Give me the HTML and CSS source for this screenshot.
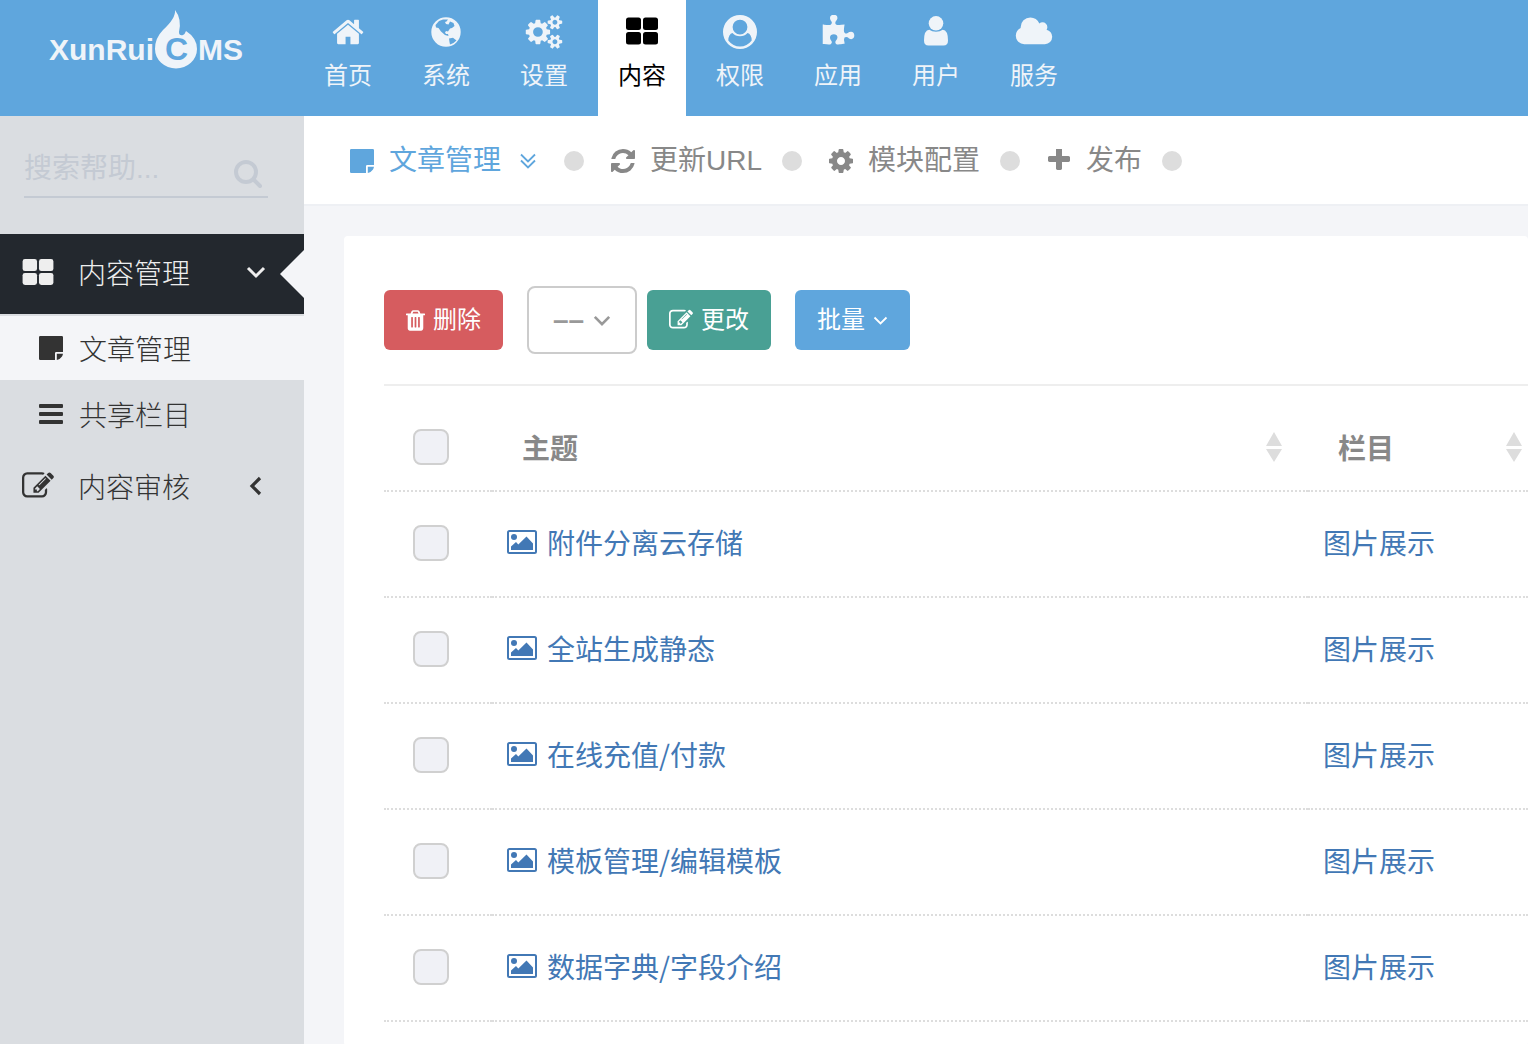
FILE: index.html
```html
<!DOCTYPE html>
<html lang="zh-CN">
<head>
<meta charset="utf-8">
<meta name="viewport" content="width=device-width, initial-scale=1">
<title>文章管理 - XunRuiCMS</title>
<link rel="stylesheet" href="styles.css">
</head>
<body>
<svg class="sprite" aria-hidden="true">
  <symbol id="i-home" viewBox="0 0 1792 1792"><path d="M1472 992v480q0 26-19 45t-45 19h-384v-384h-256v384h-384q-26 0-45-19t-19-45v-480q0-1 .5-3t.5-3l575-474 575 474q1 2 1 6zm223-69l-62 74q-8 9-21 11h-3q-13 0-21-7l-692-577-692 577q-12 8-24 7-13-2-21-11l-62-74q-8-10-7-23.5t11-21.5l719-599q32-26 76-26t76 26l244 204v-195q0-14 9-23t23-9h192q14 0 23 9t9 23v408l219 182q10 8 11 21.5t-7 23.5z"/></symbol>
  <symbol id="i-globe" viewBox="3 5 34 34"><path fill-rule="evenodd" d="M20 7.300a14.700 14.700 0 1 0 0 29.400a14.700 14.700 0 0 0 0-29.400zM9.500 15L13 11 17 9.500 22 9.500 20.500 11.500 19 12 20 14 22.500 14.500 24 11.500 27.500 13 28.500 16 26 18 24 18.500 22 21.500 20 21 19 22.500 20 24 22 24 22.500 26 19 25 15 21.500 12.500 18 10 17.500zM23 28.500L27 27.800 30.500 30.500 27.500 33 24 34.500 23.500 32z"/></symbol>
  <symbol id="i-cog" viewBox="128 128 1536 1536"><path d="M1152 896q0-106-75-181t-181-75-181 75-75 181 75 181 181 75 181-75 75-181zm512-109v222q0 12-8 23t-20 13l-185 28q-19 54-39 91 35 50 107 138 10 12 10 25t-9 23q-27 37-99 108t-94 71q-12 0-26-9l-138-108q-44 23-91 38-16 136-29 186-7 28-36 28h-222q-14 0-24.500-8.500t-11.500-21.500l-28-184q-49-16-90-37l-141 107q-10 9-25 9-14 0-25-11-126-114-165-168-7-10-7-23 0-12 8-23 15-21 51-66.500t54-70.500q-27-50-41-99l-183-27q-13-2-21-12.500t-8-23.500v-222q0-12 8-23t19-13l186-28q14-46 39-92-40-57-107-138-10-12-10-24 0-10 9-23 26-36 98.500-107.500t94.500-71.500q13 0 26 10l138 107q44-23 91-38 16-136 29-186 7-28 36-28h222q14 0 24.500 8.500t11.500 21.500l28 184q49 16 90 37l142-107q9-9 24-9 13 0 25 10 129 119 165 170 7 8 7 22 0 12-8 23-15 21-51 66.500t-54 70.500q26 50 41 98l183 28q13 2 21 12.500t8 23.500z"/></symbol>
  <symbol id="i-cogs" viewBox="-64 0 1920 1792"><path d="M832 896q0-106-75-181t-181-75-181 75-75 181 75 181 181 75 181-75 75-181zm768 512q0-52-38-90t-90-38-90 38-38 90q0 53 37.500 90.500t90.500 37.500 90.500-37.500 37.500-90.500zm0-1024q0-52-38-90t-90-38-90 38-38 90q0 53 37.500 90.500t90.500 37.500 90.500-37.500 37.500-90.500zm-384 421v185q0 10-7 19.500t-16 10.500l-155 24q-11 35-32 76 34 48 90 115 7 11 7 20 0 12-7 19-23 30-82.500 89.500t-78.500 59.500q-11 0-21-7l-115-90q-37 19-77 31-11 108-23 155-7 24-30 24h-186q-11 0-20-7.500t-10-17.500l-23-153q-34-10-75-31l-118 89q-7 7-20 7-11 0-21-8-144-133-144-160 0-9 7-19 10-14 41-53t47-61q-23-44-35-82l-152-24q-10-1-17-9.500t-7-19.500v-185q0-10 7-19.500t16-10.500l155-24q11-35 32-76-34-48-90-115-7-11-7-20 0-12 7-20 22-30 82-89t79-59q11 0 21 7l115 90q34-18 77-32 11-108 23-154 7-24 30-24h186q11 0 20 7.500t10 17.500l23 153q34 10 75 31l118-89q8-7 20-7 11 0 21 8 144 133 144 160 0 8-7 19-12 16-42 54t-45 60q23 48 34 82l152 23q10 2 17 10.500t7 19.500zm640 533v140q0 16-149 31-12 27-30 52 51 113 51 138 0 4-4 7-122 71-124 71-8 0-46-47t-52-68q-20 2-30 2t-30-2q-14 21-52 68t-46 47q-2 0-124-71-4-3-4-7 0-25 51-138-18-25-30-52-149-15-149-31v-140q0-16 149-31 13-29 30-52-51-113-51-138 0-4 4-7 4-2 35-20t59-34 30-16q8 0 46 46.500t52 67.500q20-2 30-2t30 2q51-71 92-112l6-2q4 0 124 70 4 3 4 7 0 25-51 138 17 23 30 52 149 15 149 31zm0-1024v140q0 16-149 31-12 27-30 52 51 113 51 138 0 4-4 7-122 71-124 71-8 0-46-47t-52-68q-20 2-30 2t-30-2q-14 21-52 68t-46 47q-2 0-124-71-4-3-4-7 0-25 51-138-18-25-30-52-149-15-149-31v-140q0-16 149-31 13-29 30-52-51-113-51-138 0-4 4-7 4-2 35-20t59-34 30-16q8 0 46 46.500t52 67.500q20-2 30-2t30 2q51-71 92-112l6-2q4 0 124 70 4 3 4 7 0 25-51 138 17 23 30 52 149 15 149 31z"/></symbol>
  <symbol id="i-grid" viewBox="0 0 32 27"><rect width="15" height="12.500" rx="2.500"/><rect x="17" width="15" height="12.500" rx="2.500"/><rect y="14.500" width="15" height="12.500" rx="2.500"/><rect x="17" y="14.500" width="15" height="12.500" rx="2.500"/></symbol>
  <symbol id="i-account" viewBox="0 0 34 34"><path fill-rule="evenodd" d="M17 0a17 17 0 1 0 0 34a17 17 0 0 0 0-34zM17 4.700a7.400 7.400 0 1 1 0 14.800a7.400 7.400 0 0 1 0-14.800zM9.500 18q3 3.200 7.500 3.200t7.500-3.200q4 1 4.200 7.500-4.700 6-11.700 6t-11.700-6q.2-6.500 4.200-7.500z"/></symbol>
  <symbol id="i-puzzle" viewBox="0 0 1792 1792"><path d="M1755 1083q0 81-44.500 135t-123.500 54q-41 0-77.500-17.500t-59-38-56.500-38-71-17.500q-110 0-110 124 0 39 16 115t15 115v5q-22 0-33 1-34 3-97.500 11.500t-115.500 13.500-98 5q-61 0-103-26.500t-42-83.500q0-37 17.500-71t38-56.500 38-59 17.500-77.500q0-79-54-123.500t-135-44.500q-84 0-143 45.500t-59 127.500q0 43 15 83t33.500 64.500 33.500 53 15 50.500q0 45-46 89-37 35-117 35-95 0-245-24-9-2-27.500-4t-27.500-4l-13-2q-1 0-3-1-2 0-2-1v-1024q2 1 17.500 3.500t34 5 21.500 3.500q150 24 245 24 80 0 117-35 46-44 46-89 0-22-15-50.500t-33.500-53-33.500-64.500-15-83q0-82 59-127.500t144-45.500q80 0 134 44.500t54 123.500q0 41-17.500 77.500t-38 59-38 56.500-17.500 71q0 57 42 83.500t103 26.500q64 0 180-15t163-17v2q-1 2-3.500 17.500t-5 34-3.500 21.500q-24 150-24 245 0 80 35 117 44 46 89 46 22 0 50.500-15t53-33.500 64.500-33.500 83-15q82 0 127.500 59t45.500 143z"/></symbol>
  <symbol id="i-user" viewBox="0 0 24 30"><circle cx="12" cy="7.300" r="7.300"/><path d="M5.300 13.700Q8 15.700 12 15.700T18.700 13.700Q24 14 24 24.500 24 29.500 19.500 29.500H4.500Q0 29.500 0 24.500 0 14 5.300 13.700z"/></symbol>
  <symbol id="i-cloud" viewBox="64 0 1920 1792"><path d="M1984 1152q0 159-112.500 271.500t-271.500 112.500h-1088q-185 0-316.500-131.500t-131.500-316.500q0-132 71-241.500t187-163.500q-2-28-2-43 0-212 150-362t362-150q158 0 286.500 88t187.500 230q70-62 166-62 106 0 181 75t75 181q0 75-41 138 129 30 213 134.500t84 239.500z"/></symbol>
  <symbol id="i-search" viewBox="0 0 28 28"><g fill="none" stroke="currentColor" stroke-width="4" stroke-linecap="round"><circle cx="12" cy="12" r="10"/><path d="M19.500 19.500L26 26"/></g></symbol>
  <symbol id="i-note" viewBox="0 0 24 24"><path d="M0 1.200Q0 0 1.200 0H22.800Q24 0 24 1.200V16H17.200Q16 16 16 17.200V24H1.200Q0 24 0 22.800zM17.800 17.800H24Q23.700 19.500 23 20.500L20.500 23Q19.500 23.700 17.800 24z"/></symbol>
  <symbol id="i-bars" viewBox="0 0 24 20"><rect width="24" height="4" rx="1"/><rect y="8" width="24" height="4" rx="1"/><rect y="16" width="24" height="4" rx="1"/></symbol>
  <symbol id="i-edit" viewBox="0 0 1792 1792"><path d="M888 1184l116-116-152-152-116 116v56h96v96h56zm440-720q-16-16-33 1l-350 350q-17 17-1 33t33-1l350-350q17-17 1-33zm80 594v190q0 119-84.500 203.500t-203.500 84.500h-832q-119 0-203.500-84.500t-84.500-203.500v-832q0-119 84.500-203.500t203.500-84.500h832q63 0 117 25 15 7 18 23 3 17-9 29l-49 49q-14 14-32 8-23-6-45-6h-832q-66 0-113 47t-47 113v832q0 66 47 113t113 47h832q66 0 113-47t47-113v-126q0-13 9-22l64-64q15-15 35-7t20 29zm-96-738l288 288-672 672h-288v-288zm444 132l-92 92-288-288 92-92q28-28 68-28t68 28l152 152q28 28 28 68t-28 68z"/></symbol>
  <symbol id="i-down" viewBox="0 0 20 12"><path fill="none" stroke="currentColor" stroke-width="3" d="M2 2l8 8 8-8"/></symbol>
  <symbol id="i-down-thin" viewBox="0 0 20 12"><path fill="none" stroke="currentColor" stroke-width="2.400" d="M2 2l8 8 8-8"/></symbol>
  <symbol id="i-left" viewBox="0 0 12 20"><path fill="none" stroke="currentColor" stroke-width="3.200" d="M10 2l-8 8 8 8"/></symbol>
  <symbol id="i-double-down" viewBox="0 0 16 16"><path fill="none" stroke="currentColor" stroke-width="1.800" d="M1 1.500l7 7 7-7M1 7.500l7 7 7-7"/></symbol>
  <symbol id="i-refresh" viewBox="128 128 1536 1536"><path d="M1639 1056q0 5-1 7-64 268-268 434.500t-478 166.500q-146 0-282.500-55t-243.500-157l-129 129q-19 19-45 19t-45-19-19-45v-448q0-26 19-45t45-19h448q26 0 45 19t19 45-19 45l-137 137q71 66 161 102t187 36q134 0 250-65t186-179q11-17 53-117 8-23 30-23h192q13 0 22.500 9.500t9.500 22.500zm25-800v448q0 26-19 45t-45 19h-448q-26 0-45-19t-19-45 19-45l138-138q-148-137-349-137-134 0-250 65t-186 179q-11 17-53 117-8 23-30 23h-199q-13 0-22.500-9.500t-9.500-22.500v-7q65-268 270-434.500t480-166.500q146 0 284 55.500t245 156.500l130-129q19-19 45-19t45 19 19 45z"/></symbol>
  <symbol id="i-plus" viewBox="128 192 1536 1536"><path d="M1600 736v192q0 40-28 68t-68 28h-416v416q0 40-28 68t-68 28h-192q-40 0-68-28t-28-68v-416h-416q-40 0-68-28t-28-68v-192q0-40 28-68t68-28h416v-416q0-40 28-68t68-28h192q40 0 68 28t28 68v416h416q40 0 68 28t28 68z"/></symbol>
  <symbol id="i-trash" viewBox="192 128 1408 1536"><path d="M704 1376v-704q0-14-9-23t-23-9h-64q-14 0-23 9t-9 23v704q0 14 9 23t23 9h64q14 0 23-9t9-23zm256 0v-704q0-14-9-23t-23-9h-64q-14 0-23 9t-9 23v704q0 14 9 23t23 9h64q14 0 23-9t9-23zm256 0v-704q0-14-9-23t-23-9h-64q-14 0-23 9t-9 23v704q0 14 9 23t23 9h64q14 0 23-9t9-23zm-544-992h448l-48-117q-7-9-17-11h-317q-10 2-17 11zm928 32v64q0 14-9 23t-23 9h-96v948q0 83-47 143.500t-113 60.500h-832q-66 0-113-58.500t-47-141.500v-952h-96q-14 0-23-9t-9-23v-64q0-14 9-23t23-9h309l70-167q15-37 54-63t79-26h320q40 0 79 26t54 63l70 167h309q14 0 23 9t9 23z"/></symbol>
  <symbol id="i-photo" viewBox="0 0 30 24"><rect x="1" y="1" width="28" height="22" rx="1.500" fill="none" stroke="currentColor" stroke-width="2"/><circle cx="7" cy="7" r="3"/><path d="M4 20v-3.500l5-4.500 2.300 2.500 8.200-8 6.500 7V20z"/></symbol>
  <symbol id="i-sort" viewBox="0 0 18 32"><path d="M9 1l8 14H1zM9 31l8-13H1z"/></symbol>
</svg>

<header class="topbar">
  <a class="logo" href="#" aria-label="XunRuiCMS">
    <svg class="logo-art" viewBox="0 0 196 60" aria-hidden="true">
      <text class="logo-word" x="0" y="50">XunRui</text>
      <path d="M126 0Q133 9 130 22 130 26 134 25 136 24 137 21 148 28 148 39A21 19.500 0 0 1 106 39Q106 28 114 20 127 8 126 0z"/>
      <text class="logo-c" x="116" y="50">C</text>
      <text class="logo-word" x="149" y="50">MS</text>
    </svg>
  </a>
  <nav class="topnav" aria-label="主导航">
    <a href="#"><svg class="nav-icon"><use href="#i-home"/></svg>首页</a>
    <a href="#"><svg class="nav-icon"><use href="#i-globe"/></svg>系统</a>
    <a href="#"><svg class="nav-icon"><use href="#i-cogs"/></svg>设置</a>
    <a href="#" class="active" aria-current="page"><svg class="nav-icon inset"><use href="#i-grid"/></svg>内容</a>
    <a href="#"><svg class="nav-icon"><use href="#i-account"/></svg>权限</a>
    <a href="#"><svg class="nav-icon"><use href="#i-puzzle"/></svg>应用</a>
    <a href="#"><svg class="nav-icon inset"><use href="#i-user"/></svg>用户</a>
    <a href="#"><svg class="nav-icon"><use href="#i-cloud"/></svg>服务</a>
  </nav>
</header>

<div class="layout">
  <aside class="sidebar">
    <form class="search">
      <input type="search" placeholder="搜索帮助..." aria-label="搜索帮助">
      <button type="submit" aria-label="搜索"><svg><use href="#i-search"/></svg></button>
    </form>
    <nav class="menu" aria-label="侧边菜单">
      <a class="menu-item open" href="#"><svg class="menu-icon"><use href="#i-grid"/></svg><span>内容管理</span><svg class="arrow"><use href="#i-down"/></svg></a>
      <div class="submenu">
        <a class="current" href="#"><svg><use href="#i-note"/></svg>文章管理</a>
        <a href="#"><svg><use href="#i-bars"/></svg>共享栏目</a>
      </div>
      <a class="menu-item" href="#"><svg class="menu-icon wide"><use href="#i-edit"/></svg><span>内容审核</span><svg class="arrow"><use href="#i-left"/></svg></a>
    </nav>
  </aside>

  <main class="content">
    <nav class="page-bar" aria-label="页面操作">
      <a class="current" href="#"><svg><use href="#i-note"/></svg>文章管理<svg class="more"><use href="#i-double-down"/></svg></a>
      <a href="#"><svg><use href="#i-refresh"/></svg>更新URL</a>
      <a href="#"><svg><use href="#i-cog"/></svg>模块配置</a>
      <a href="#"><svg><use href="#i-plus"/></svg>发布</a>
    </nav>

    <section class="card">
      <div class="toolbar">
        <button class="btn red" type="button"><svg class="trash"><use href="#i-trash"/></svg>删除</button>
        <div class="change">
          <div class="select">
            <select aria-label="选择栏目"><option>––</option></select>
            <svg><use href="#i-down"/></svg>
          </div>
          <button class="btn green" type="button"><svg><use href="#i-edit"/></svg>更改</button>
        </div>
        <button class="btn blue" type="button">批量<svg class="caret"><use href="#i-down-thin"/></svg></button>
      </div>
      <table>
        <thead>
          <tr>
            <th class="col-check"><input type="checkbox" aria-label="全选"></th>
            <th class="col-title"><div class="sortable">主题<svg><use href="#i-sort"/></svg></div></th>
            <th class="col-cat"><div class="sortable">栏目<svg><use href="#i-sort"/></svg></div></th>
          </tr>
        </thead>
        <tbody>
          <tr><td class="col-check"><input type="checkbox" aria-label="选择 附件分离云存储"></td><td><a href="#"><svg><use href="#i-photo"/></svg>附件分离云存储</a></td><td><a href="#">图片展示</a></td></tr>
          <tr><td class="col-check"><input type="checkbox" aria-label="选择 全站生成静态"></td><td><a href="#"><svg><use href="#i-photo"/></svg>全站生成静态</a></td><td><a href="#">图片展示</a></td></tr>
          <tr><td class="col-check"><input type="checkbox" aria-label="选择 在线充值/付款"></td><td><a href="#"><svg><use href="#i-photo"/></svg>在线充值/付款</a></td><td><a href="#">图片展示</a></td></tr>
          <tr><td class="col-check"><input type="checkbox" aria-label="选择 模板管理/编辑模板"></td><td><a href="#"><svg><use href="#i-photo"/></svg>模板管理/编辑模板</a></td><td><a href="#">图片展示</a></td></tr>
          <tr><td class="col-check"><input type="checkbox" aria-label="选择 数据字典/字段介绍"></td><td><a href="#"><svg><use href="#i-photo"/></svg>数据字典/字段介绍</a></td><td><a href="#">图片展示</a></td></tr>
        </tbody>
      </table>
    </section>
  </main>
</div>
</body>
</html>
```
FILE: styles.css
```css
* { box-sizing: border-box; }

body {
  margin: 0;
  min-height: 100vh;
  display: flex;
  flex-direction: column;
  background: #f4f5f8;
  color: #333;
  font: 28px/40px "Liberation Sans", "Noto Sans CJK SC", sans-serif;
}

a { color: inherit; text-decoration: none; }
svg { fill: currentColor; flex: none; }
button, input, select { font: inherit; }
.sprite { position: absolute; width: 0; height: 0; }

/* Top bar */
.topbar { display: flex; height: 116px; background: #5fa6dd; color: #eff4f9; }
.logo { width: 304px; padding: 10px 0 0 49px; flex: none; }
.logo-art { display: block; width: 196px; height: 60px; }
.logo-word { font-size: 30px; font-weight: bold; }
.logo-c { font-size: 32px; font-weight: bold; fill: #5fa6dd; }
.topnav { display: flex; gap: 10px; font-size: 24px; line-height: 36px; }
.topnav a {
  width: 88px;
  padding-top: 15px;
  display: flex;
  flex-direction: column;
  align-items: center;
  gap: 9px;
}
.topnav .active { background: #fff; color: #000; }
.nav-icon { width: 40px; height: 34px; }
.nav-icon.inset { width: 32px; height: 30px; margin: 1px 0 3px; }

.layout { display: flex; flex: 1; }

/* Sidebar */
.sidebar { width: 304px; flex: none; background: #dadde1; }
.search {
  display: flex;
  align-items: center;
  margin: 32px 36px 36px 24px;
  height: 50px;
  border-bottom: 2px solid #c4cad3;
  color: #c4cad3;
}
.search input {
  flex: 1;
  min-width: 0;
  padding: 0 0 6px;
  border: 0;
  outline: 0;
  background: none;
  color: #555;
}
.search input::placeholder { color: #c4cad3; opacity: 1; }
.search button { padding: 6px; border: 0; background: none; color: inherit; }
.search svg { display: block; width: 28px; height: 28px; margin-top: 4px; }

.menu { font-family: "Noto Sans CJK SC", sans-serif; font-weight: 300; }
.menu-item { display: flex; align-items: center; height: 80px; padding: 0 38px 4px 22px; position: relative; }
.menu-item span { flex: 1; }
.menu-icon { width: 32px; height: 26px; margin-right: 24px; }
.menu-icon.wide { height: 36px; }
.arrow { width: 20px; height: 20px; }
.menu-item.open { background: #23282e; color: #eee; }
.menu-item.open::after {
  content: "";
  position: absolute;
  right: 0;
  top: 16px;
  border: 24px solid transparent;
  border-left: 0;
  border-right-color: #f4f5f8;
}
.submenu { display: grid; gap: 2px; padding: 2px 0; }
.submenu a { display: flex; align-items: center; gap: 16px; height: 64px; padding-left: 39px; }
.submenu svg { width: 24px; height: 24px; }
.submenu .current { background: #f4f5f8; }

/* Page actions */
.content { flex: 1; min-width: 0; }
.page-bar {
  display: flex;
  height: 90px;
  padding: 2px 0 0 46px;
  background: #fff;
  border-bottom: 2px solid #eef0f4;
  color: #888;
}
.page-bar a { display: flex; align-items: center; }
.page-bar a::after {
  content: "";
  width: 20px;
  height: 20px;
  margin: 0 27px 0 20px;
  border-radius: 50%;
  background: #ddd;
}
.page-bar svg { width: 24px; height: 24px; margin-right: 15px; }
.page-bar .current { color: #5fa6dd; }
.page-bar .more { width: 16px; height: 16px; margin: 0 8px 0 19px; }

/* Card */
.card { margin: 30px 0 0 40px; padding: 50px 0 24px 40px; background: #fff; border-radius: 4px; }
.toolbar { display: flex; align-items: center; gap: 24px; padding-bottom: 30px; border-bottom: 2px solid #eee; }
.change { display: flex; align-items: center; gap: 10px; }
.btn {
  display: flex;
  align-items: center;
  gap: 8px;
  height: 60px;
  padding: 0 22px;
  border: 0;
  border-radius: 6px;
  color: #fff;
  font-size: 24px;
}
.btn svg { width: 24px; height: 24px; }
.btn .trash { width: 19px; height: 21px; }
.btn .caret { width: 15px; height: 9px; }
.red { background: #d65c5f; }
.green { background: #49a094; }
.blue { background: #5fa6dd; }
.select { display: grid; align-items: center; width: 110px; color: #999; }
.select select {
  grid-area: 1 / 1;
  height: 68px;
  padding: 0 24px;
  border: 2px solid #ccc;
  border-radius: 8px;
  background: #fff;
  color: inherit;
  font-weight: bold;
  appearance: none;
}
.select svg { grid-area: 1 / 1; justify-self: end; width: 18px; height: 11px; margin-right: 26px; pointer-events: none; }

table {
  width: 100%;
  border-collapse: separate;
  border-spacing: 0;
  table-layout: fixed;
  font-family: "Noto Sans CJK SC", sans-serif;
}
th, td { height: 106px; padding: 0 15px; border-bottom: 2px dotted #ddd; text-align: left; color: #888; }
th { padding-top: 18px; }
td { padding-bottom: 2px; }
td a { display: inline-flex; align-items: center; gap: 10px; padding-bottom: 4px; color: #4278b5; vertical-align: middle; }
td svg { width: 30px; height: 24px; }
.col-check { width: 108px; padding-left: 29px; }
.col-title { width: 816px; }
.sortable { display: flex; align-items: center; justify-content: space-between; padding-left: 15px; }
.sortable svg { width: 18px; height: 32px; color: #ddd; margin-right: 10px; }
.col-cat { padding-right: 0; }
.col-cat .sortable svg { margin-right: 5px; }
input[type="checkbox"] {
  display: block;
  appearance: none;
  width: 36px;
  height: 36px;
  margin: 0;
  border: 2px solid #d0d0d0;
  border-radius: 8px;
  background: #f0f1f6;
}
input[type="checkbox"]:checked { background: #5fa6dd; }
```
